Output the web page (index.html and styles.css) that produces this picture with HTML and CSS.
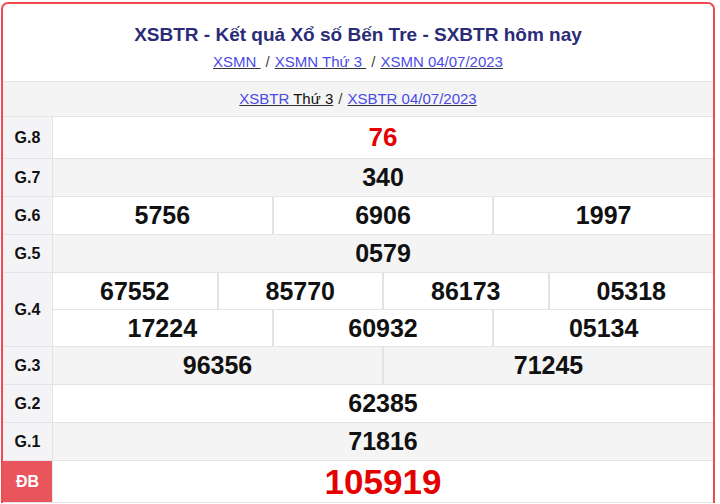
FILE: index.html
```html
<!DOCTYPE html>
<html lang="vi">
<head>
<meta charset="utf-8">
<link rel="stylesheet" href="styles.css">
</head>
<body>
<div class="box">
  <div class="head">
    <h1 class="title">XSBTR - Kết quả Xổ số Bến Tre - SXBTR hôm nay</h1>
    <div class="links"><a href="#">XSMN </a><span class="sep">/</span><a href="#">XSMN Thứ 3 </a><span class="sep">/</span><a href="#">XSMN 04/07/2023</a></div>
  </div>
  <div class="sub"><a href="#">XSBTR <span class="plain">Thứ 3</span></a><span class="sep">/</span><a href="#">XSBTR 04/07/2023</a></div>
  <div class="rows">
    <div class="row tall"><div class="lbl">G.8</div><div class="cells"><div class="line"><div class="num red">76</div></div></div></div>
    <div class="row gray"><div class="lbl">G.7</div><div class="cells"><div class="line"><div class="num">340</div></div></div></div>
    <div class="row"><div class="lbl">G.6</div><div class="cells"><div class="line"><div class="num">5756</div><div class="num">6906</div><div class="num">1997</div></div></div></div>
    <div class="row gray"><div class="lbl">G.5</div><div class="cells"><div class="line"><div class="num">0579</div></div></div></div>
    <div class="row"><div class="lbl">G.4</div><div class="cells">
      <div class="line half"><div class="num">67552</div><div class="num">85770</div><div class="num">86173</div><div class="num">05318</div></div>
      <div class="line half"><div class="num">17224</div><div class="num">60932</div><div class="num">05134</div></div>
    </div></div>
    <div class="row gray"><div class="lbl">G.3</div><div class="cells"><div class="line"><div class="num">96356</div><div class="num">71245</div></div></div></div>
    <div class="row"><div class="lbl">G.2</div><div class="cells"><div class="line"><div class="num">62385</div></div></div></div>
    <div class="row gray"><div class="lbl">G.1</div><div class="cells"><div class="line"><div class="num">71816</div></div></div></div>
    <div class="row tall"><div class="lbl db">ĐB</div><div class="cells"><div class="line"><div class="num red big">105919</div></div></div></div>
  </div>
</div>
</body>
</html>
```

FILE: styles.css
```css
* { box-sizing: border-box; }
html, body { margin: 0; padding: 0; background: #ffffff; }
body { font-family: "Liberation Sans", Arial, sans-serif; color: #111; }
.box {
  margin: 2px 5px 0 1px;
  border: 2px solid #f04a4f;
  border-bottom: none;
  border-radius: 7px 7px 0 0;
  overflow: hidden;
}
.head { padding: 20px 0 10px; text-align: center; border-bottom: 1px solid #e3e3e8; }
.title { margin: 0; font-size: 19px; line-height: 22px; font-weight: bold; color: #2b2c78; }
.links { margin-top: 7px; font-size: 15px; line-height: 18px; color: #444; }
.sep { padding: 0 5px; }
a { color: #4b4be6; text-decoration: underline; text-decoration-color: #333; }
.plain { color: #111; }
.sub { background: #f4f4f5; text-align: center; font-size: 15px; line-height: 33px; height: 35px; color: #444; border-bottom: 1px solid #e3e3e8; }
.rows { display: flex; flex-direction: column; }
.row { display: flex; border-bottom: 1px solid #e3e3e8; min-height: 38px; }
.row.tall { min-height: 42px; }
.row.gray { background: #f4f4f5; }
.lbl { width: 50px; flex: none; display: flex; align-items: center; justify-content: center; font-weight: bold; font-size: 16px; background: #f4f4f6; border-right: 1px solid #e3e3e8; color: #111; }
.lbl.db { background: #e8555c; color: #fff; font-size: 16px; }
.cells { flex: 1; display: flex; flex-direction: column; }
.line { flex: 1; display: flex; }
.line.half + .line.half { border-top: 1px solid #e3e3e8; }
.num { flex: 1; display: flex; align-items: center; justify-content: center; font-weight: bold; font-size: 25px; color: #111; }
.num + .num { border-left: 2px solid #e3e3e3; }
.line.half .num { min-height: 36px; }
.red { color: #e40000; font-size: 26px; }
.big { font-size: 35px; }
```
